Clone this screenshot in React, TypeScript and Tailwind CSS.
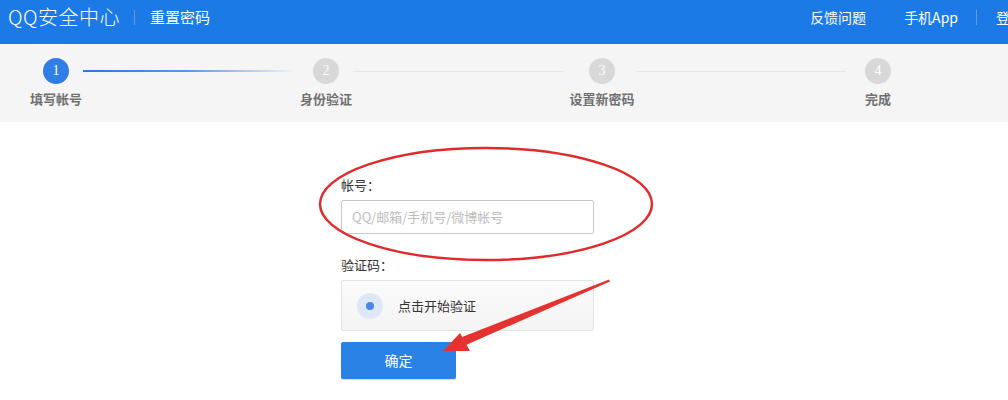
import React from "react";

const font = { fontFamily: '"Noto Sans CJK SC", "Noto Sans", sans-serif' };

function Step({ n, label, active }: { n: number; label: string; active?: boolean }) {
  return (
    <div className="w-[80px] flex flex-col items-center shrink-0">
      <div
        className={`w-[26px] h-[26px] rounded-full flex items-center justify-center text-white text-[14px] leading-none ${
          active ? "bg-[#2f7ee6]" : "bg-[#d8d8d8]"
        }`}
        style={{ fontFamily: '"Liberation Serif", serif' }}
      >
        {n}
      </div>
      <div className="mt-[7px] text-[13px] leading-[16px] font-bold text-[#707070] whitespace-nowrap">{label}</div>
    </div>
  );
}

export default function App() {
  return (
    <div className="relative w-[1008px] h-[400px] overflow-hidden bg-white" style={font}>
      {/* header */}
      <div className="h-[44px] bg-[#1b7ae6] flex items-start pt-[5px] text-white">
        <div className="pl-[8px] text-[20px] leading-[24px] font-light tracking-[0.5px]">QQ安全中心</div>
        <div className="ml-[14px] mt-[5px] w-px h-[15px] bg-[#5c9eee]" />
        <div className="ml-[15px] mt-[3px] text-[15px] leading-[18px]">重置密码</div>
        <div className="flex-1" />
        <div className="mt-[3px] text-[14px] leading-[18px]">反馈问题</div>
        <div className="ml-[38px] mt-[3px] text-[14px] leading-[18px]">手机App</div>
        <div className="ml-[18px] mt-[5px] w-px h-[15px] bg-[#5c9eee]" />
        <div className="ml-[19px] mt-[3px] text-[14px] leading-[18px] w-[12px] overflow-hidden whitespace-nowrap">登录</div>
      </div>

      {/* steps */}
      <div className="h-[78px] bg-[#f5f5f5] flex items-start pl-[16px] pt-[14px]">
        <Step n={1} label="填写帐号" active />
        <div className="h-[2px] mt-[12px] ml-[-13px] mr-[-7px] w-[210px] shrink-0 bg-gradient-to-r from-[#2a78d8] via-[#5a98e4] to-[#eef2f7]" />
        <Step n={2} label="身份验证" />
        <div className="h-px mt-[13px] ml-[-13px] mr-[-2px] w-[211px] shrink-0 bg-[#e6e6e6]" />
        <Step n={3} label="设置新密码" />
        <div className="h-px mt-[13px] ml-[-6px] mr-[-8px] w-[210px] shrink-0 bg-[#e6e6e6]" />
        <Step n={4} label="完成" />
      </div>

      {/* form */}
      <div className="pl-[341px] pt-[54px]">
        <div className="text-[13px] leading-[18px] text-[#333]">帐号：</div>
        <div className="mt-[6px] w-[253px] h-[34px] border border-[#c9c9c9] rounded-[2px] flex items-center pl-[10px] text-[13px] text-[#bdbdbd]">
          QQ/邮箱/手机号/微博帐号
        </div>
        <div className="mt-[22px] text-[13px] leading-[18px] text-[#333]">验证码：</div>
        <div className="mt-[6px] w-[253px] h-[51px] border border-[#e3e3e3] rounded-[2px] bg-gradient-to-b from-[#fbfbfb] to-[#f4f4f4] flex items-center pl-[15px]">
          <div className="w-[26px] h-[26px] rounded-full bg-[#dfe8f6] flex items-center justify-center">
            <div className="w-[8px] h-[8px] rounded-full bg-[#4a86e6]" />
          </div>
          <div className="ml-[15px] text-[13px] text-[#333]">点击开始验证</div>
        </div>
        <div className="mt-[11px] w-[115px] h-[37px] bg-[#2b82e6] rounded-[2px] flex items-center justify-center text-white text-[14px] shadow-[0_1px_1px_rgba(0,0,0,0.15)]">
          确定
        </div>
      </div>

      {/* annotations */}
      <svg className="absolute left-0 top-0 pointer-events-none" width="1008" height="400">
        <ellipse cx="486" cy="204" rx="166" ry="56" fill="none" stroke="#e02b2c" strokeWidth="2.5" />
        <polygon points="609,279.5 610,281.5 466,345 462,337" fill="#e3322f" />
        <polygon points="443,351 460,333 470,351" fill="#e3322f" />
      </svg>
    </div>
  );
}
